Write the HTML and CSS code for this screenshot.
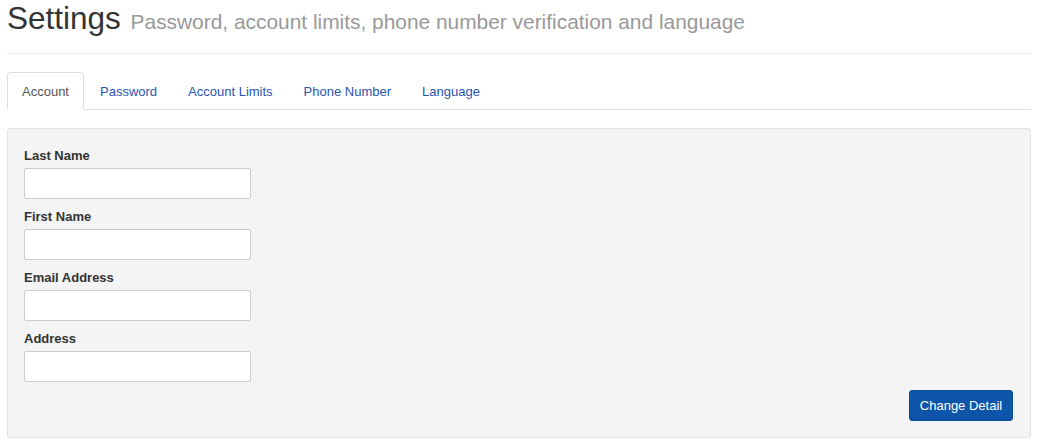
FILE: index.html
```html
<!DOCTYPE html>
<html lang="en">
<head>
<meta charset="utf-8">
<title>Settings</title>
<link rel="stylesheet" href="styles.css">
</head>
<body>
<div class="page">
  <header class="page-header">
    <h1 class="title">Settings <small class="subtitle">Password, account limits, phone number verification and language</small></h1>
  </header>
  <ul class="tabs">
    <li class="tab active"><a href="#">Account</a></li>
    <li class="tab"><a href="#">Password</a></li>
    <li class="tab"><a href="#">Account Limits</a></li>
    <li class="tab"><a href="#">Phone Number</a></li>
    <li class="tab"><a href="#">Language</a></li>
  </ul>
  <form class="well">
    <div class="group">
      <label class="label" for="ln">Last Name</label>
      <input class="input" id="ln" type="text">
    </div>
    <div class="group">
      <label class="label" for="fn">First Name</label>
      <input class="input" id="fn" type="text">
    </div>
    <div class="group">
      <label class="label" for="em">Email Address</label>
      <input class="input" id="em" type="text">
    </div>
    <div class="group group-last">
      <label class="label" for="ad">Address</label>
      <input class="input" id="ad" type="text">
    </div>
    <div class="actions">
      <button class="btn" type="button">Change Detail</button>
    </div>
  </form>
</div>
</body>
</html>
```
FILE: styles.css
```css
* { box-sizing: border-box; }
html, body { margin: 0; padding: 0; background: #fff; }
body {
  font-family: "Liberation Sans", Arial, sans-serif;
  font-size: 13px;
  color: #333;
}
.page { padding: 2px 12px 0 7px; }
.page-header {
  padding-bottom: 18px;
  border-bottom: 1px solid #eee;
}
.title {
  margin: 0;
  font-size: 31.5px;
  font-weight: normal;
  line-height: 33px;
  color: #333;
}
.subtitle {
  font-size: 20.9px;
  line-height: 1;
  color: #999;
  margin-left: 1px;
}
.tabs {
  list-style: none;
  margin: 18px 0 0 0;
  padding: 0;
  display: flex;
  border-bottom: 1px solid #ddd;
}
.tab { margin-right: 1px; margin-bottom: -1px; }
.tab a {
  display: block;
  padding: 10px 14px 8px;
  line-height: 18px;
  border: 1px solid transparent;
  border-radius: 4px 4px 0 0;
  color: #2a55b0;
  text-decoration: none;
}
.tab.active a {
  color: #555;
  background: #fff;
  border-color: #ddd #ddd #fff #ddd;
}
.well {
  margin: 18px 0 0 0;
  padding: 19px 17px 16px 16px;
  background: #f4f4f4;
  border: 1px solid #e3e3e3;
  border-radius: 3px;
}
.group { margin-bottom: 10px; }
.group.group-last { margin-bottom: 8px; }
.label {
  display: block;
  font-weight: bold;
  line-height: 16px;
  margin-bottom: 4px;
  color: #333;
}
.input {
  display: block;
  width: 227px;
  height: 31px;
  margin: 0;
  padding: 4px 8px;
  background: #fff;
  border: 1px solid #ccc;
  border-radius: 2px;
  font: inherit;
}
.actions { display: flex; justify-content: flex-end; }
.btn {
  height: 31px;
  width: 104px;
  padding: 0;
  background: #0d55a8;
  color: #fff;
  border: 1px solid #0b4d98;
  border-radius: 3px;
  font-family: inherit;
  font-size: 13px;
}
```
